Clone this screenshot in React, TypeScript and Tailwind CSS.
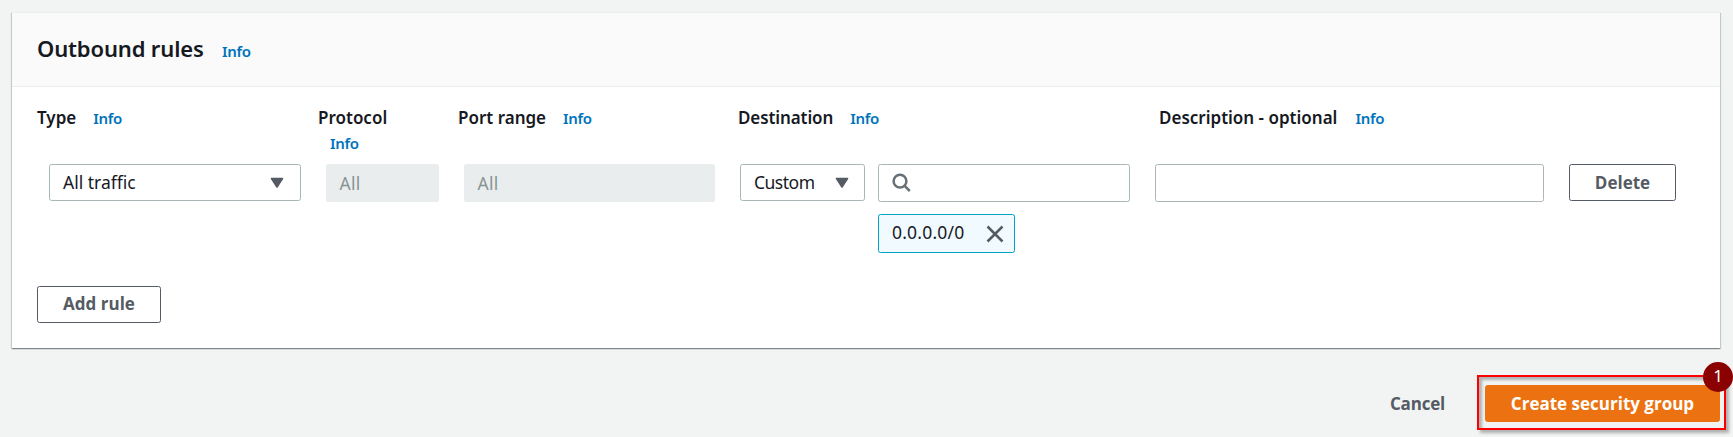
import type { ReactNode } from "react";

function Info({ className = "" }: { className?: string }) {
  return (
    <a className={`text-[15px] font-semibold tracking-[-0.3px] text-[#0073bb] ${className}`}>
      Info
    </a>
  );
}

function Label({ children, className }: { children: ReactNode; className: string }) {
  return (
    <div className={`shrink-0 text-[17px] leading-[25px] font-semibold text-[#16191f] ${className}`}>
      {children}
    </div>
  );
}

function Caret() {
  return (
    <svg viewBox="0 0 14 12" className="h-3 w-3.5 shrink-0">
      <path d="M1.5 1.5h11L7 10z" fill="#545b64" stroke="#545b64" strokeWidth="1.6" strokeLinejoin="round" />
    </svg>
  );
}

function Select({ value, className }: { value: string; className: string }) {
  return (
    <div className={`flex h-[37px] shrink-0 items-center justify-between rounded-[2.5px] border border-[#aab7b8] bg-white pl-[13px] text-[#16191f] ${className}`}>
      <span className="leading-[27px]">{value}</span>
      <Caret />
    </div>
  );
}

function Disabled({ className }: { className: string }) {
  return (
    <div className={`flex h-[38px] shrink-0 items-center rounded-[2.5px] bg-[#eaeded] pl-[13.5px] text-[#879596] ${className}`}>
      <span className="tracking-[0.3px]">All</span>
    </div>
  );
}

function Button({ children, className }: { children: ReactNode; className: string }) {
  return (
    <button
      type="button"
      className={`flex h-[37px] shrink-0 items-center justify-center rounded-[2.5px] border font-['Open_Sans',sans-serif] text-[17px] font-bold ${className}`}
    >
      {children}
    </button>
  );
}

export default function App() {
  return (
    <div className="h-[437px] w-[1733px] overflow-hidden bg-[#f2f3f3] pt-[12px] pl-[12px] font-['Noto_Sans',sans-serif] text-[17.5px]">
      <section className="h-[336px] w-[1708px] border-t border-[#eaeded] bg-white shadow-[0_1px_1px_0_rgba(0,28,36,0.3),1px_1px_1px_0_rgba(0,28,36,0.15),-1px_1px_1px_0_rgba(0,28,36,0.15)]">
        <header className="flex h-[74px] items-baseline border-b border-[#eaeded] bg-[#fafafa] pt-[19px] pl-[25px]">
          <h2 className="w-[185px] text-[22px] leading-[32px] font-semibold tracking-[-0.15px] text-[#16191f]">
            Outbound rules
          </h2>
          <Info />
        </header>

        <div className="flex h-[77px] items-start pt-[18px] pl-[25px]">
          <Label className="w-[281px]">
            Type<Info className="ml-[17px]" />
          </Label>
          <Label className="w-[140px]">
            Protocol
            <div>
              <Info className="ml-[12px]" />
            </div>
          </Label>
          <Label className="w-[280px]">
            Port range<Info className="ml-[17px]" />
          </Label>
          <Label className="w-[421px]">
            <span className="tracking-[-0.1px]">Destination</span>
            <Info className="ml-[17px]" />
          </Label>
          <Label className="w-[300px]">
            Description - optional<Info className="ml-[18px]" />
          </Label>
        </div>

        <div className="flex items-start pl-[37px]">
          <Select value="All traffic" className="mr-[25px] w-[252px] pr-[16px]" />
          <Disabled className="mr-[25px] w-[113px]" />
          <Disabled className="mr-[25px] w-[251px]" />
          <Select value="Custom" className="mr-[13px] w-[125px] pr-[15px] tracking-[-0.5px]" />
          <div className="mr-[25px] flex w-[252px] shrink-0 flex-col gap-[12px]">
            <div className="flex h-[38px] items-center rounded-[2.5px] border border-[#aab7b8] bg-white pl-[13px]">
              <svg viewBox="0 0 20 20" className="h-5 w-5" fill="none" stroke="#687078" strokeWidth="2.5">
                <circle cx="8" cy="8.2" r="6.4" />
                <path d="M12.4 12.6l5.4 5.4" />
              </svg>
            </div>
            <div className="flex h-[39px] w-[137px] items-center justify-between rounded-[2.5px] border border-[#00a1c9] bg-[#f1faff] pr-[10px] pl-[13px] text-[#16191f]">
              <span className="pb-[2px] tracking-[0.2px]">0.0.0.0/0</span>
              <svg viewBox="0 0 18 18" className="h-[18px] w-[18px]" fill="none" stroke="#545b64" strokeWidth="2.5">
                <path d="M1.5 1.5l15 15M16.5 1.5l-15 15" />
              </svg>
            </div>
          </div>
          <div className="mr-[25px] h-[38px] w-[389px] shrink-0 rounded-[2.5px] border border-[#aab7b8] bg-white" />
          <Button className="w-[107px] border-[#545b64] bg-white text-[#545b64]">Delete</Button>
        </div>

        <div className="pt-[33px] pl-[25px]">
          <Button className="w-[124px] border-[#545b64] bg-white pb-[1px] text-[#545b64]">Add rule</Button>
        </div>
      </section>

      <footer className="flex items-center justify-end pt-[27px] pr-[7px]">
        <Button className="mt-[2px] mr-[31px] border-transparent text-[#545b64]">
          <span className="tracking-[-0.2px]">Cancel</span>
        </Button>
        <div className="relative flex h-[55px] w-[249px] items-start border-2 border-[#ff0000] pt-[8px] pl-[6px] shadow-[3px_3px_3px_rgba(0,0,0,0.28),inset_3px_3px_3px_rgba(0,0,0,0.28)]">
          <Button className="w-[235px] border-[#ec7211] bg-[#ec7211] text-white">Create security group</Button>
          <span className="absolute -top-[15px] -right-[9px] flex h-[30px] w-[30px] items-center justify-center rounded-full bg-[#8b0000] pb-[2px] text-[17px] text-white">
            1
          </span>
        </div>
      </footer>
    </div>
  );
}
